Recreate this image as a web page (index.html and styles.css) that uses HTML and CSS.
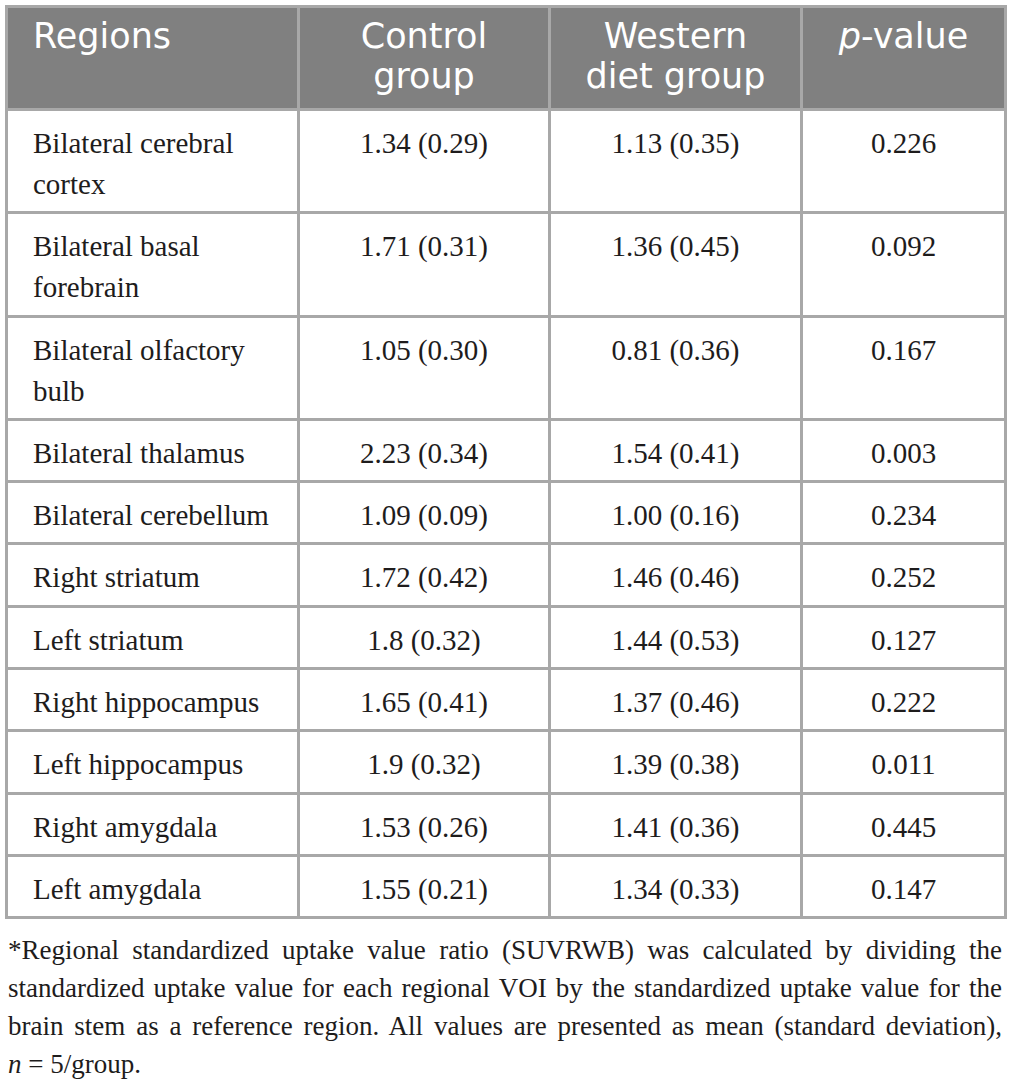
FILE: index.html
```html
<!DOCTYPE html>
<html lang="en">
<head>
<meta charset="utf-8">
<title>SUVR table</title>
<link rel="stylesheet" href="styles.css">
</head>
<body>
<div class="page">
  <table class="data">
    <colgroup>
      <col class="c1"><col class="c2"><col class="c3"><col class="c4">
    </colgroup>
    <thead>
      <tr>
        <th class="left">Regions</th>
        <th>Control<br>group</th>
        <th>Western<br>diet group</th>
        <th><i>p</i>-value</th>
      </tr>
    </thead>
    <tbody>
      <tr><td class="left">Bilateral cerebral<br>cortex</td><td>1.34 (0.29)</td><td>1.13 (0.35)</td><td>0.226</td></tr>
      <tr><td class="left">Bilateral basal<br>forebrain</td><td>1.71 (0.31)</td><td>1.36 (0.45)</td><td>0.092</td></tr>
      <tr><td class="left">Bilateral olfactory<br>bulb</td><td>1.05 (0.30)</td><td>0.81 (0.36)</td><td>0.167</td></tr>
      <tr><td class="left">Bilateral thalamus</td><td>2.23 (0.34)</td><td>1.54 (0.41)</td><td>0.003</td></tr>
      <tr><td class="left">Bilateral cerebellum</td><td>1.09 (0.09)</td><td>1.00 (0.16)</td><td>0.234</td></tr>
      <tr><td class="left">Right striatum</td><td>1.72 (0.42)</td><td>1.46 (0.46)</td><td>0.252</td></tr>
      <tr><td class="left">Left striatum</td><td>1.8 (0.32)</td><td>1.44 (0.53)</td><td>0.127</td></tr>
      <tr><td class="left">Right hippocampus</td><td>1.65 (0.41)</td><td>1.37 (0.46)</td><td>0.222</td></tr>
      <tr><td class="left">Left hippocampus</td><td>1.9 (0.32)</td><td>1.39 (0.38)</td><td>0.011</td></tr>
      <tr><td class="left">Right amygdala</td><td>1.53 (0.26)</td><td>1.41 (0.36)</td><td>0.445</td></tr>
      <tr><td class="left">Left amygdala</td><td>1.55 (0.21)</td><td>1.34 (0.33)</td><td>0.147</td></tr>
    </tbody>
  </table>
  <p class="note">*Regional standardized uptake value ratio (SUVRWB) was calculated by dividing the standardized uptake value for each regional VOI by the standardized uptake value for the brain stem as a reference region. All values are presented as mean (standard deviation), <span class="nowrap"><i>n</i> = 5/group.</span></p>
</div>
</body>
</html>
```
FILE: styles.css
```css
html, body {
  margin: 0;
  padding: 0;
  background: #ffffff;
}

.page {
  padding: 5px 6px 0 5px;
  font-family: "Liberation Serif", "Times New Roman", serif;
  color: #1e1c1c;
}

.data {
  border-collapse: collapse;
  table-layout: fixed;
  width: 999px;
}

.c1 { width: 292px; }
.c2 { width: 251px; }
.c3 { width: 252px; }
.c4 { width: 204px; }

.data th,
.data td {
  border: 3px solid #a8a8a8;
  text-align: center;
  vertical-align: top;
}

.data th {
  background: #808080;
  color: #ffffff;
  font-family: "DejaVu Sans", Inter, sans-serif;
  font-weight: 400;
  font-size: 35px;
  line-height: 40px;
  padding: 8px 10px 12px;
}

.data td {
  font-size: 29px;
  line-height: 41px;
  padding: 12px 10px 6.3px;
}

.data .left {
  text-align: left;
  padding-left: 25px;
}

.note {
  margin: 12px 2px 0 3px;
  font-size: 27px;
  line-height: 38px;
  text-align: justify;
}

.nowrap {
  white-space: nowrap;
}
```
